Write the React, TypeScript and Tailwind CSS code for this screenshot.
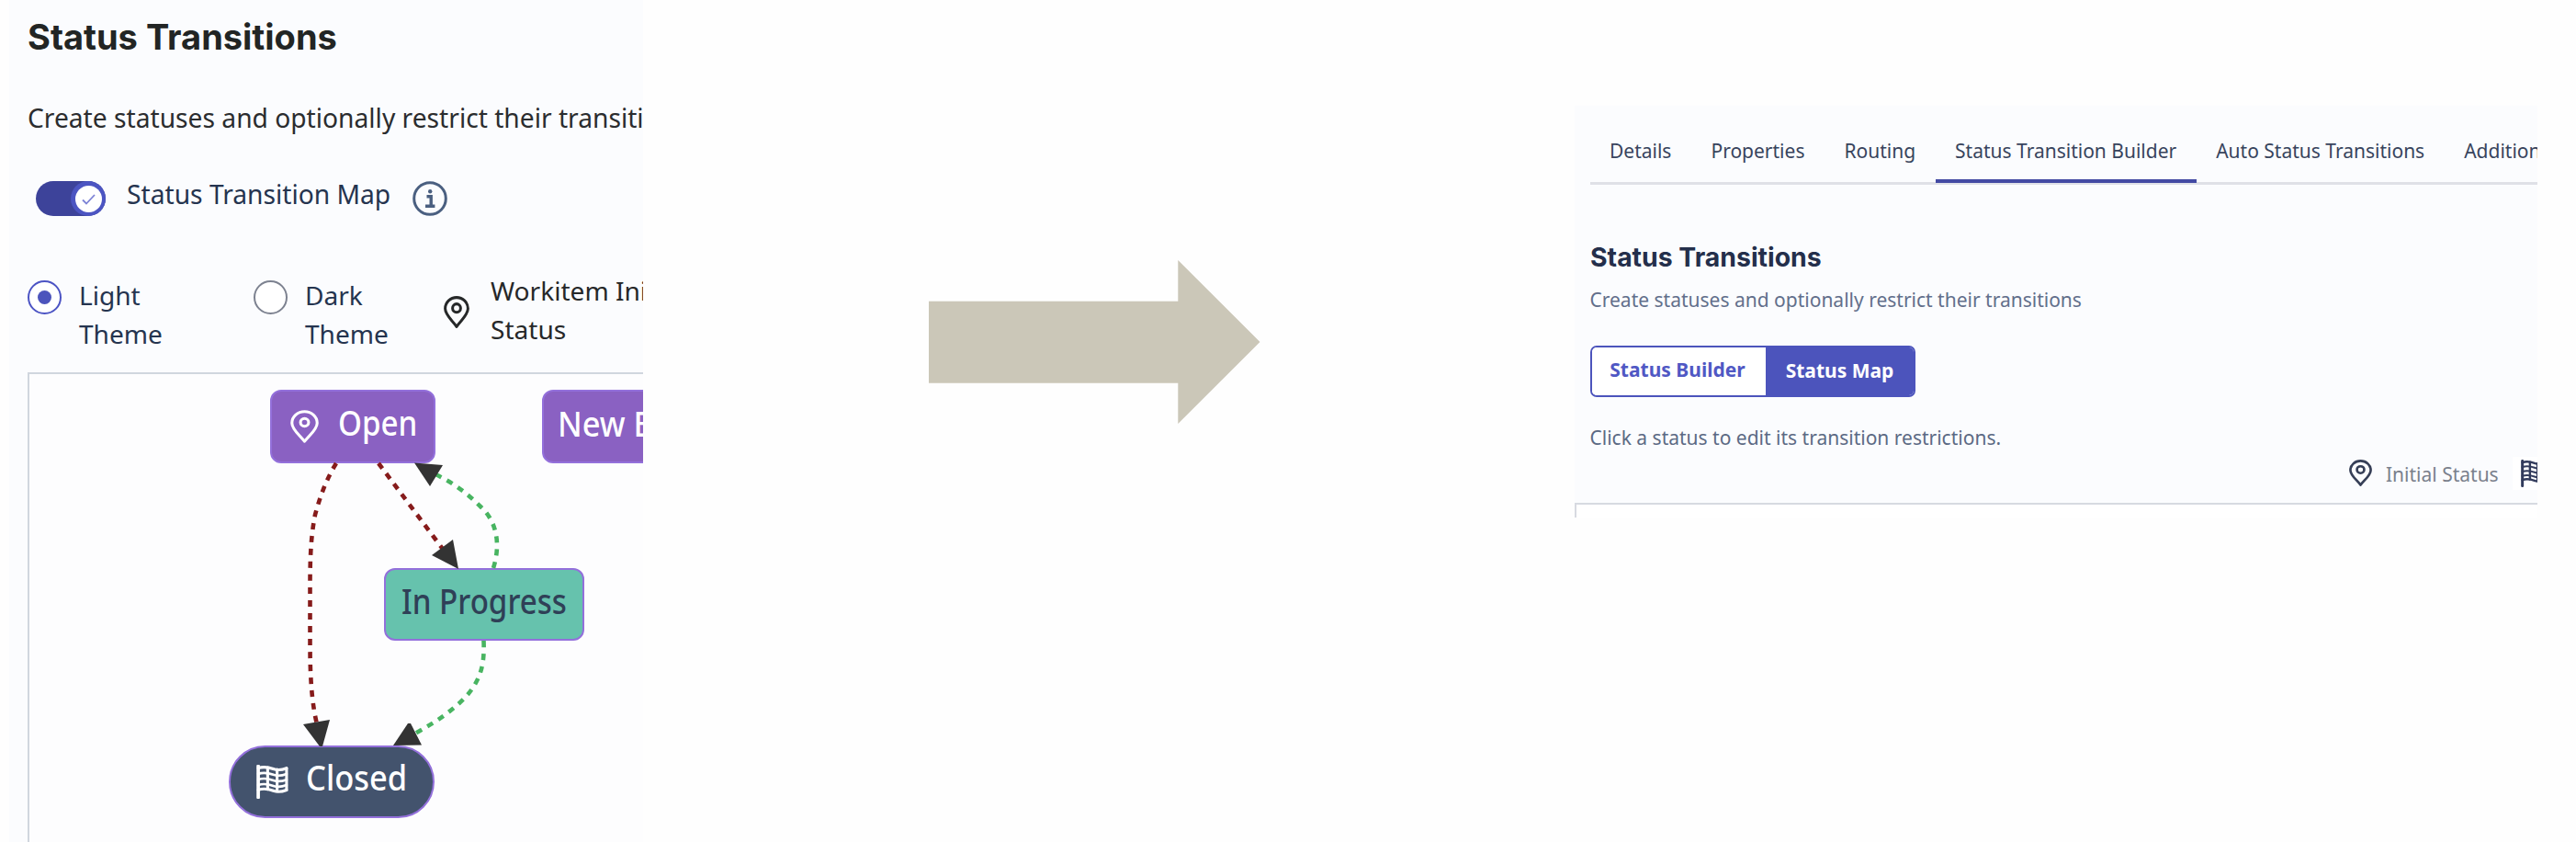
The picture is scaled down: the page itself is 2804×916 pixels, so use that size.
import type { ReactNode } from 'react';

const noto = "font-['Noto_Sans','Open_Sans',sans-serif]";

function PinIcon({ className, weight = 3, ring = 4.4 }: { className: string; weight?: number; ring?: number }) {
  return (
    <svg className={className} viewBox="0 0 28 34" fill="none" stroke="currentColor" strokeWidth={weight} strokeLinejoin="round" preserveAspectRatio="none">
      <path d="M14 32.4C10.2 26.6 1.6 20.4 1.6 13.4A12.4 11.8 0 0 1 26.4 13.4C26.4 20.4 17.8 26.6 14 32.4Z" />
      <circle cx="14" cy="12.8" r={ring} />
    </svg>
  );
}

function FlagIcon({ className }: { className: string }) {
  return (
    <svg className={className} viewBox="0 0 34 36" fill="none" stroke="currentColor" strokeWidth="3" strokeLinecap="round">
      <path d="M2 1.5V34.5" strokeWidth="3.6" />
      <path d="M2 3.5C8 1.5 13 2.6 18 4.4S27 5.5 32 3.6" />
      <path d="M2 9.6C8 7.6 13 8.7 18 10.5S27 11.6 32 9.7" strokeWidth="2.6" />
      <path d="M2 15.6C8 13.6 13 14.7 18 16.5S27 17.6 32 15.7" strokeWidth="2.6" />
      <path d="M2 21.4C8 19.4 13 20.5 18 22.3S27 23.4 32 21.5" strokeWidth="2.6" />
      <path d="M2 26.6C8 24.6 13 25.7 18 27.5S27 28.6 32 26.7" />
      <path d="M12 3V26M22 5V28M32 3.6V26.7" />
    </svg>
  );
}

function InfoIcon() {
  return (
    <svg className="size-[38px] text-[#4a5f80]" viewBox="0 0 38 38" fill="none" stroke="currentColor">
      <circle cx="19" cy="19" r="17.3" strokeWidth="3" />
      <path d="M15.5 16.8H20.2V27M14 27.2H24.4" strokeWidth="3.4" />
      <circle cx="19.2" cy="11.3" r="2.2" fill="currentColor" stroke="none" />
    </svg>
  );
}

function Radio({ checked, children }: { checked?: boolean; children: ReactNode }) {
  return (
    <label className="flex w-[246px] shrink-0 gap-[19px] pt-[5px] text-[#25344f]">
      <span className={`mt-[3.500px] flex size-[37px] shrink-0 items-center justify-center rounded-full border-[2.5px] bg-white ${checked ? 'border-[#4c54c4]' : 'border-[#7d8290]'}`}>
        {checked && <span className="size-[15px] rounded-full bg-[#4c54bc]" />}
      </span>
      <span className="w-[95px]">{children}</span>
    </label>
  );
}

function NodeText({ wide, children }: { wide?: boolean; children: ReactNode }) {
  return (
    <span className={`inline-block origin-left text-[38.5px] leading-[48px] font-medium whitespace-nowrap ${wide ? 'scale-x-[0.895]' : 'scale-x-[0.86]'}`}>
      {children}
    </span>
  );
}

function StatusMap() {
  return (
    <div className="relative mt-[27px] min-h-0 flex-1 overflow-hidden border-t-2 border-l-2 border-[#d0d6de] bg-[#fdfdfe]">
      <div className="absolute top-[17px] left-[262px] flex h-[80px] w-[180px] items-center gap-[21px] rounded-[12px] border-2 border-[#9370db] bg-[#8a61c2] pl-[20px] text-white">
        <PinIcon className="h-[36px] w-[31px] shrink-0" weight={2.8} ring={4} />
        <div className="pb-[9px]"><NodeText>Open</NodeText></div>
      </div>
      <div className="absolute top-[17px] left-[558px] flex h-[80px] w-[260px] items-center rounded-[12px] border-2 border-[#9370db] bg-[#8a61c2] pb-[9px] pl-[15px] text-white">
        <NodeText wide>New Bug</NodeText>
      </div>
      <div className="absolute top-[211px] left-[386px] flex h-[79px] w-[218px] items-center rounded-[12px] border-2 border-[#9370db] bg-[#66c2ad] pb-[9px] pl-[17px] text-[#2f4057]">
        <NodeText>In Progress</NodeText>
      </div>
      <div className="absolute top-[404px] left-[217px] flex h-[79px] w-[224px] items-center gap-[19px] rounded-[40px] border-2 border-[#9370db] bg-[#43536d] pl-[28px] text-white">
        <FlagIcon className="h-[37px] w-[35px] shrink-0" />
        <div className="pb-[9px]"><NodeText wide>Closed</NodeText></div>
      </div>
      <svg className="absolute top-0 left-0 h-[509px] w-[668px]" viewBox="32 407 668 509" fill="none" strokeWidth="4.6" strokeDasharray="7 7">
        <path stroke="#861b1b" d="M366 504C356 520 349 538 343 560C338 585 337.5 610 337.5 640V700C337.5 735 339 765 346 792" />
        <path stroke="#861b1b" d="M412 504L484 600" />
        <path stroke="#48b461" d="M537 618C544 596 543 570 524 552C510 538 495 526 474 516" />
        <path stroke="#48b461" d="M526.5 697C527.5 722 524 738 508 757C492 774 472 787 450 799" />
        <g fill="#333" stroke="none">
          <path d="M330 788L359 783L351 812H348Z" />
          <path d="M493 587L470 604L499 619Z" />
          <path d="M451 503.5L482 506L468 529Z" />
          <path d="M428 811L444 787H447L459 810.5Z" />
        </g>
      </svg>
    </div>
  );
}

function BeforePanel() {
  return (
    <section className="flex h-[916px] w-[690px] shrink-0 flex-col overflow-hidden bg-[#fbfcfe] pl-5 text-[28.1px] leading-[41.5px]">
      <h1 className="pt-4 font-[Inter,sans-serif] text-[38px] leading-[48px] font-bold text-[#222524]">Status Transitions</h1>
      <p className="mt-[43px] text-[28.2px] leading-[42px] whitespace-nowrap text-[#2b2d2f]">Create statuses and optionally restrict their transitions</p>
      <div className="mt-12 flex h-[38px] items-center pl-[9px]">
        <div className="flex h-[38px] w-[76px] items-center justify-end rounded-full bg-[#3d439a]">
          <div className="flex size-[38px] items-center justify-center rounded-full bg-[#4c55c2]">
            <div className="flex size-[29px] items-center justify-center rounded-full bg-white">
              <svg className="size-[17px]" viewBox="0 0 17 17" fill="none" stroke="#7d83d6" strokeWidth="1.8"><path d="M2 9.5L6 13.5L15 4" /></svg>
            </div>
          </div>
        </div>
        <span className="mb-2 ml-[23px] w-[311px] text-[28.2px] text-[#25344f]">Status Transition Map</span>
        <InfoIcon />
      </div>
      <div className="mt-[61px] flex h-[82px]">
        <Radio checked>Light Theme</Radio>
        <Radio>Dark Theme</Radio>
        <div className="-ml-[39px] flex shrink-0 text-[#262829]">
          <PinIcon className="mt-[26px] h-[35px] w-[28px]" />
          <span className="ml-[23px] whitespace-nowrap">Workitem Initial<br />Status</span>
        </div>
      </div>
      <StatusMap />
    </section>
  );
}

const tabs = ['Details', 'Properties', 'Routing', 'Status Transition Builder', 'Auto Status Transitions', 'Additional Fields'];

function AfterPanel() {
  return (
    <section className="flex h-[448px] w-[1048px] shrink-0 flex-col overflow-hidden bg-[#fbfcfe] text-[21px] leading-[30px]">
      <nav className="ml-[16.5px] flex h-[86px] shrink-0 border-b-[3px] border-[#dfe1e7] text-[#38445d]">
        {tabs.map((tab) => (
          <a key={tab} className="relative px-[21.5px] pt-[34px] whitespace-nowrap">
            {tab}
            {tab === 'Status Transition Builder' && <span className="absolute inset-x-0 -bottom-px h-1 bg-[#434aa3]" />}
          </a>
        ))}
      </nav>
      <div className="flex flex-col items-start pl-[17px]">
        <h2 className="mt-[61px] font-[Inter,sans-serif] text-[28.4px] leading-[36px] font-bold text-[#242f4b]">Status Transitions</h2>
        <p className="mt-[13px] -ml-[0.5px] text-[#626f8b]">Create statuses and optionally restrict their transitions</p>
        <div className="mt-[35px] flex h-[56px] overflow-hidden rounded-[7px] border-2 border-[#4c54bc] font-bold">
          <button className="w-[189px] bg-white pr-[3px] pb-1 text-[#5058c4]">Status Builder</button>
          <button className="w-[161px] bg-[#4c54bc] pb-[3px] text-white">Status Map</button>
        </div>
        <p className="mt-[28.5px] -ml-[0.5px] text-[#5c6a84]">Click a status to edit its transition restrictions.</p>
      </div>
      <div className="mt-[6px] ml-[843px] flex h-[36px] shrink-0 items-center">
        <PinIcon className="h-[29px] w-[25px] shrink-0 text-[#363f57]" />
        <span className="mt-[2px] ml-[15px] w-[138px] shrink-0 whitespace-nowrap text-[#7a808c]">Initial Status</span>
        <div className="flex size-[36px] shrink-0 items-center bg-white pl-[9px]">
          <FlagIcon className="h-[30px] w-[28px] shrink-0 text-[#323b5c]" />
        </div>
      </div>
      <div className="mt-[14.5px] flex-1 border-t-2 border-l-2 border-[#d7dae1] bg-white" />
    </section>
  );
}

export default function App() {
  return (
    <main className={`flex h-[916px] w-[2804px] overflow-hidden bg-[#fefefe] pl-[10px] ${noto}`}>
      <BeforePanel />
      <div className="flex w-[1014px] shrink-0 justify-start pt-[283px] pl-[311px]">
        <svg className="h-[179px] w-[361px]" viewBox="0 0 361 179" fill="#cbc7b8">
          <path d="M0 44.7H271.3V0L360.5 89L271.3 178V133.7H0Z" />
        </svg>
      </div>
      <div className="pt-[115px]">
        <AfterPanel />
      </div>
    </main>
  );
}
